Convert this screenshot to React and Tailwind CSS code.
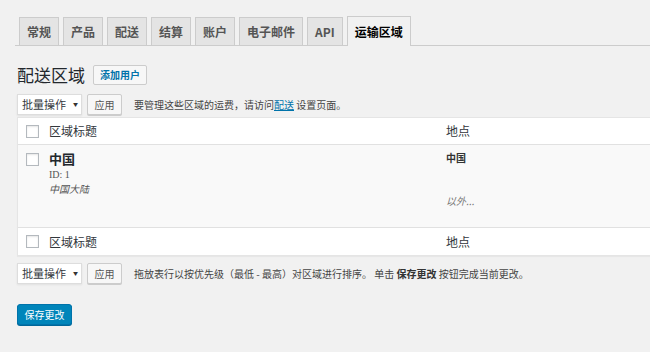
import React from 'react';

const TABS = ['常规', '产品', '配送', '结算', '账户', '电子邮件', 'API'];

function Checkbox() {
  return <span className="block w-[13px] h-[13px] border border-[#b4b9be] bg-white shadow-[inset_0_1px_2px_rgba(0,0,0,0.1)]" />;
}

function BulkBar({ children }) {
  return (
    <div className="flex items-center h-[20px] whitespace-nowrap">
      <div className="flex items-center w-[65px] h-[21px] bg-white border border-[#ddd] shadow-[0_1px_2px_rgba(0,0,0,0.07)] pl-[4px] text-[11px] text-[#32373c]">
        批量操作
        <span className="ml-[7px] text-[5px] text-[#333]">▼</span>
      </div>
      <button className="ml-[5px] w-[35px] h-[21px] bg-[#f7f7f7] border border-[#ccc] rounded-[2px] shadow-[0_1px_0_#ccc] text-[10px] text-[#555]">
        应用
      </button>
      <p className="ml-[12px] text-[10px] text-[#444]">{children}</p>
    </div>
  );
}

export default function App() {
  return (
    <div
      className="w-[650px] h-[352px] bg-[#f1f1f1] overflow-hidden"
      style={{ fontFamily: '"Noto Sans CJK SC", "Liberation Sans", sans-serif' }}
    >
      {/* tabs */}
      <div className="pt-[16px] ml-[15px] border-b border-[#ccc] flex items-end h-[46px] pl-[4px]">
        {TABS.map((t) => (
          <div
            key={t}
            className="mr-[4px] h-[28px] px-[7px] flex items-center bg-[#e4e4e4] border border-[#ccc] border-b-0 text-[12px] font-bold text-[#555]"
          >
            {t}
          </div>
        ))}
        <div className="-mb-px h-[30px] px-[7px] flex items-center bg-[#f1f1f1] border border-[#ccc] border-b-0 text-[12px] font-bold text-[#000]">
          运输区域
        </div>
      </div>

      <div className="pl-[17px]">
        {/* heading */}
        <div className="flex items-center mt-[18px] h-[21px]">
          <h1 className="text-[17px] text-[#23282d] leading-none">配送区域</h1>
          <button className="ml-[8px] h-[20px] px-[6px] bg-[#f7f7f7] border border-[#ccc] rounded-[2px] text-[10px] font-bold text-[#0073aa]">
            添加用户
          </button>
        </div>

        <div className="mt-[9px]">
          <BulkBar>
            要管理这些区域的运费，请访问<a className="text-[#0073aa] underline">配送</a> 设置页面。
          </BulkBar>
        </div>

        {/* table */}
        <div className="mt-[3px] w-[700px] border border-[#e5e5e5] bg-white shadow-[0_1px_1px_rgba(0,0,0,0.04)]">
          <div className="flex items-center h-[27px] border-b border-[#e1e1e1] text-[12px] text-[#32373c]">
            <div className="w-[31px] pl-[8px]"><Checkbox /></div>
            <div className="w-[397px]">区域标题</div>
            <div>地点</div>
          </div>
          <div className="flex h-[83px] bg-[#f9f9f9] border-b border-[#e1e1e1]">
            <div className="w-[31px] pl-[8px] pt-[8px]"><Checkbox /></div>
            <div className="w-[397px] pt-[5px]">
              <div className="text-[13px] font-bold text-[#23282d] leading-[17px]">中国</div>
              <div className="text-[10px] text-[#555] leading-[14px] mt-[1px]" style={{ fontFamily: '"Liberation Serif", serif' }}>ID: 1</div>
              <div className="text-[10px] italic text-[#555] leading-[14px]">中国大陆</div>
            </div>
            <div className="pt-[6px]">
              <div className="text-[10px] font-bold text-[#333] leading-[14px]">中国</div>
              <div className="text-[10px] italic text-[#777] mt-[28px]">以外...</div>
            </div>
          </div>
          <div className="flex items-center h-[27px] text-[12px] text-[#32373c]">
            <div className="w-[31px] pl-[8px]"><Checkbox /></div>
            <div className="w-[397px]">区域标题</div>
            <div>地点</div>
          </div>
        </div>

        <div className="mt-[7px]">
          <BulkBar>
            拖放表行以按优先级（最低 - 最高）对区域进行排序。 单击 <b className="text-[#333]">保存更改</b> 按钮完成当前更改。
          </BulkBar>
        </div>

        <button className="mt-[21px] h-[21px] w-[55px] bg-[#0085ba] border border-[#0073aa] rounded-[3px] shadow-[0_1px_0_#006799] text-[10px] text-white">
          保存更改
        </button>
      </div>
    </div>
  );
}
